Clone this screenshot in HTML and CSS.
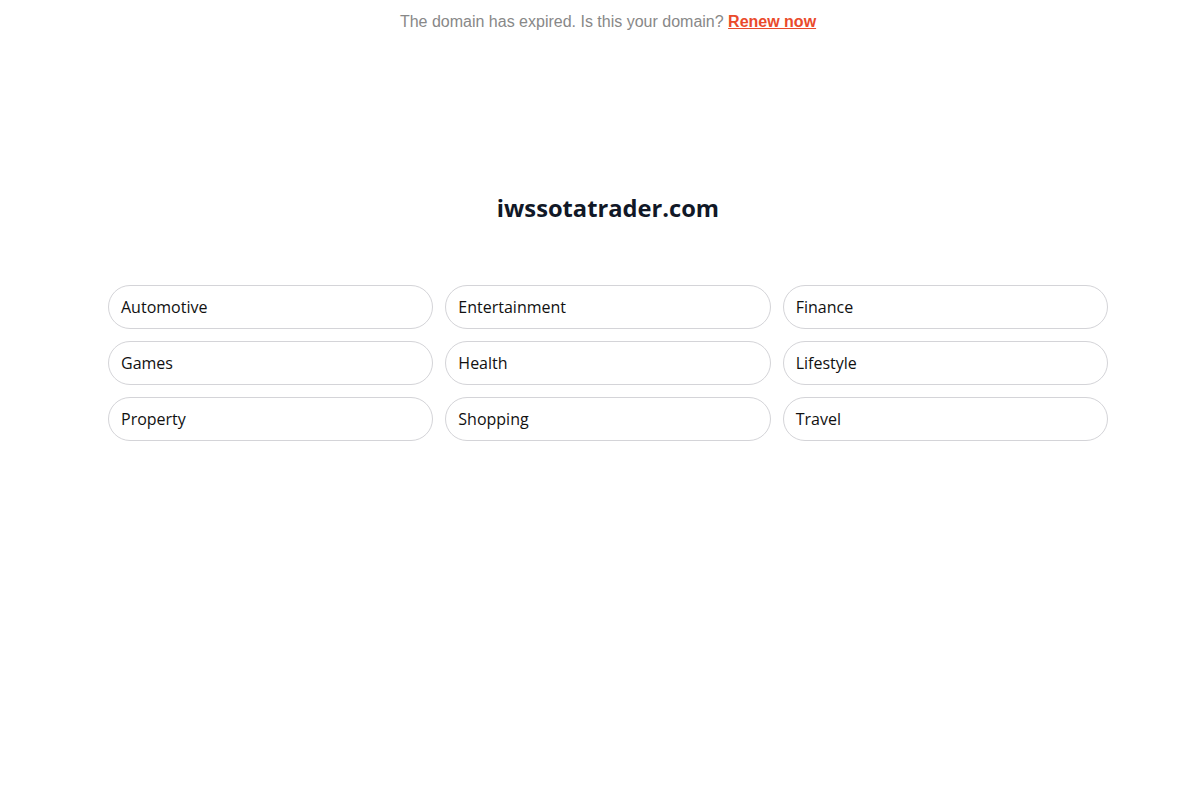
FILE: index.html
```html
<!DOCTYPE html>
<html lang="en">
<head>
  <meta charset="UTF-8">
  <title>iwssotatrader.com</title>
  <meta name="viewport" content="width=device-width, initial-scale=1">
  <link rel="stylesheet" href="styles.css">
</head>
<body>
<div class="page">
  <div class="notice">
    The domain has expired. Is this your domain? <a href="#" class="renew">Renew now</a>
  </div>
  <h1 class="domain">iwssotatrader.com</h1>
  <div class="links">
    <a href="#" class="link">Automotive</a>
    <a href="#" class="link">Entertainment</a>
    <a href="#" class="link">Finance</a>
    <a href="#" class="link">Games</a>
    <a href="#" class="link">Health</a>
    <a href="#" class="link">Lifestyle</a>
    <a href="#" class="link">Property</a>
    <a href="#" class="link">Shopping</a>
    <a href="#" class="link">Travel</a>
  </div>
</div>
</body>
</html>
```

FILE: styles.css
```css
html, body {
  margin: 0;
  padding: 0;
  background: #fff;
}
.page {
  padding-left: 16px;
  box-sizing: border-box;
  width: 100%;
}
.notice {
  font-family: "Liberation Sans", Arial, sans-serif;
  font-size: 16px;
  color: #888;
  text-align: center;
  padding-top: 13px;
  line-height: 18px;
}
.renew {
  color: #ea4a2b;
  font-weight: bold;
  text-decoration: underline;
}
.domain {
  font-family: "Open Sans", sans-serif;
  font-weight: 700;
  font-size: 23.7px;
  line-height: 32px;
  color: #111827;
  text-align: center;
  margin: 161px 0 0;
}
.links {
  display: grid;
  grid-template-columns: repeat(3, 1fr);
  gap: 12px;
  width: 1000px;
  margin: 61px auto 0;
}
.link {
  display: flex;
  align-items: center;
  height: 44px;
  box-sizing: border-box;
  padding: 0 12px;
  border: 1px solid #d4d4d8;
  border-radius: 22px;
  font-family: "Open Sans", sans-serif;
  font-size: 16px;
  color: #111;
  text-decoration: none;
}
```
